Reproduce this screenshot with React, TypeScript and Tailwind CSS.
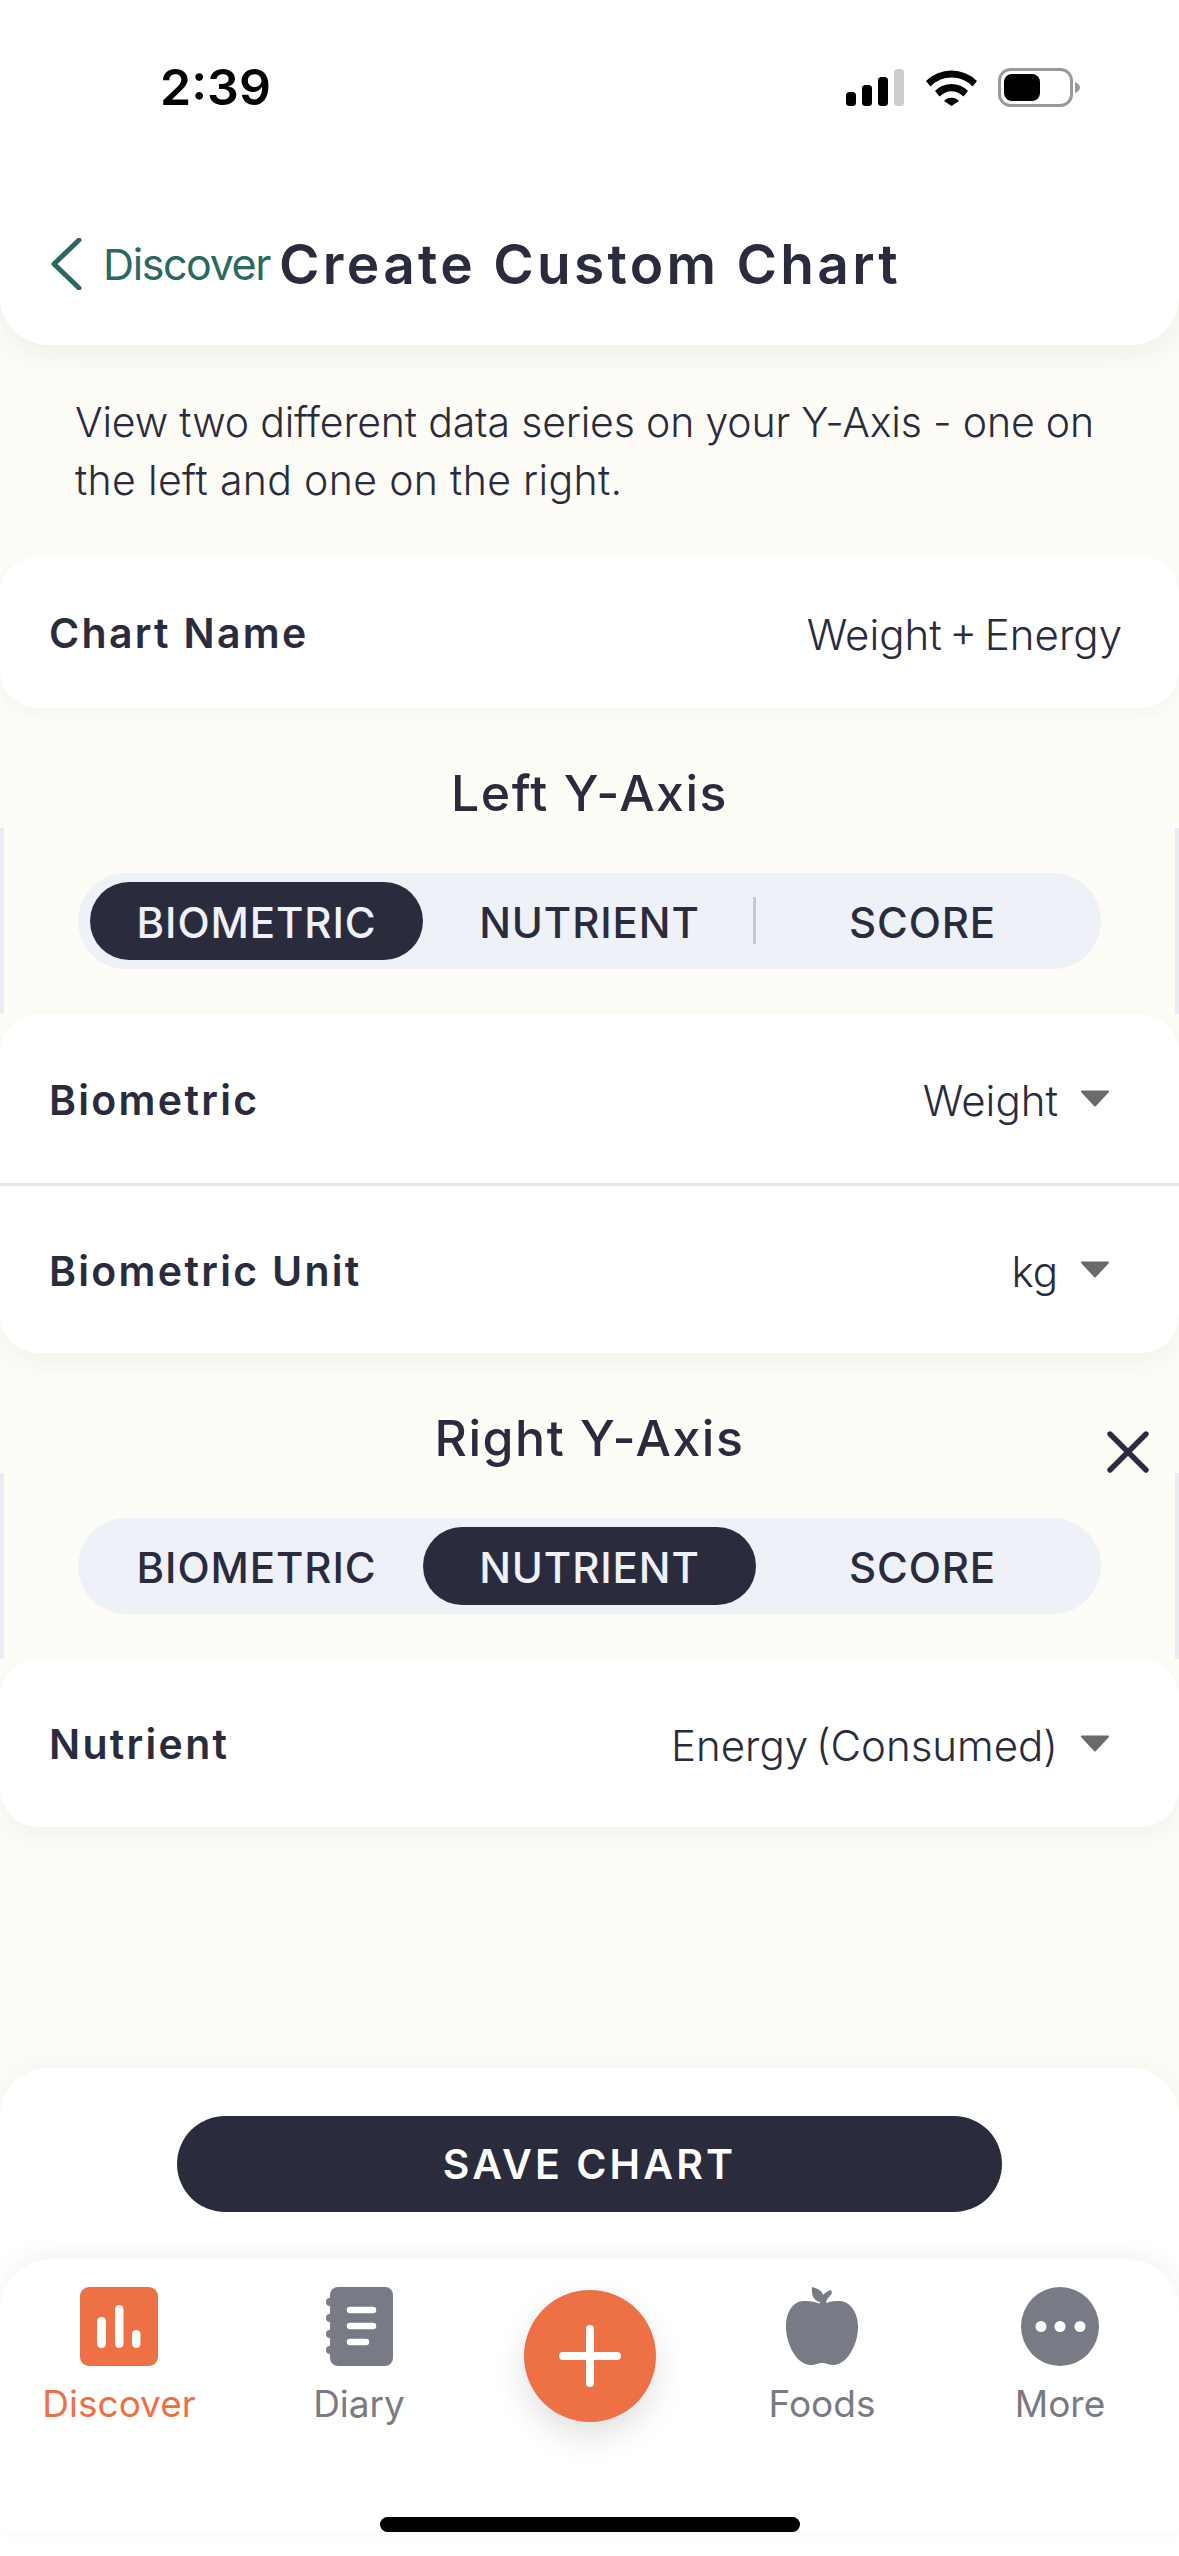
import { X } from "lucide-react";

const tabs = ["BIOMETRIC", "NUTRIENT", "SCORE"];

// Segmented control for one axis
const Segments = ({ active, divider }: { active: number; divider?: boolean }) => (
  <div className="border-x-[4px] border-[#e9ebf5] px-[74px] py-[45px]">
    <div className="grid h-[96px] grid-cols-3 items-center rounded-full bg-[#eff1f9] px-[12px]">
      {tabs.map((t, i) => (
        <div key={t} className="relative flex h-[78px] items-center justify-center">
          <div
            className={
              i === active
                ? "flex h-full w-full items-center justify-center rounded-full bg-[#2a2c3e] pt-[2px] text-[42px] font-medium tracking-[0.9px] text-[#eff1f9]"
                : "flex h-full w-full items-center justify-center rounded-full pt-[2px] text-[42px] font-medium tracking-[0.9px] text-[#2a2c3e]"
            }
          >
            {t}
          </div>
          {divider && i === 1 && <div className="absolute right-0 top-[15px] h-[47px] w-[3px] bg-[#c5c7d2]" />}
        </div>
      ))}
    </div>
  </div>
);

const Caret = () => (
  <svg width="30" height="17" viewBox="0 0 30 17" className="ml-[22px] mb-[4px]">
    <path d="M2 1.5h26L15 15.5z" fill="#6b6b6b" stroke="#6b6b6b" strokeWidth="2" strokeLinejoin="round" />
  </svg>
);

const Row = ({ label, value, h }: { label: string; value: string; h: string }) => (
  <div className={`flex items-center justify-between pl-[49px] pr-[69px] pt-[4px] ${h}`}>
    <span className="text-[41px] font-semibold tracking-[2.3px] text-[#2a2c3e]">{label}</span>
    <span className="flex items-center text-[42px] font-light [word-spacing:-4px] text-[#2a2c3e]">
      {value}
      <Caret />
    </span>
  </div>
);

const Discover = () => (
  <svg width="78" height="79" viewBox="0 0 78 79">
    <rect width="78" height="79" rx="9" fill="#ee7145" />
    <rect x="17" y="30" width="9" height="31" rx="4.5" fill="#fff" />
    <rect x="35" y="18" width="8.5" height="43" rx="4.25" fill="#fff" />
    <rect x="52" y="43" width="8.5" height="18" rx="4.25" fill="#fff" />
  </svg>
);

const Diary = () => (
  <svg width="67" height="79" viewBox="0 0 67 79">
    <rect x="4" width="63" height="79" rx="8" fill="#787a85" />
    <circle cx="4" cy="15" r="4" fill="#787a85" />
    <circle cx="4" cy="31" r="4" fill="#787a85" />
    <circle cx="4" cy="47" r="4" fill="#787a85" />
    <circle cx="4" cy="63" r="4" fill="#787a85" />
    <path d="M24 23h23M24 39h23M24 55h16" stroke="#fff" strokeWidth="6.5" strokeLinecap="round" />
  </svg>
);

const Apple = () => (
  <svg width="72" height="79" viewBox="0 0 72 79">
    <path
      d="M36 17C30 15 24 13.5 17 14 6 15 0 26 0 40c0 16 10 38 25 38 5 0 7-2 11-2s7 2 11 2c15 0 25-22 25-38 0-14-7-25-18-26-7-.5-12 1-18 3z"
      fill="#787a85"
    />
    <path
      d="M26 0c7 2 10 4 11 8 2-2 4-4 8-5l1 3c-2 4-6 5-6 11h-6v-2c-6-1-9-7-8-15z"
      fill="#787a85"
    />
  </svg>
);

const More = () => (
  <svg width="78" height="79" viewBox="0 0 78 79">
    <ellipse cx="39" cy="39.5" rx="39" ry="39.5" fill="#787a85" />
    <circle cx="20" cy="39.5" r="5.5" fill="#fff" />
    <circle cx="39" cy="39.5" r="5.5" fill="#fff" />
    <circle cx="59" cy="39.5" r="5.5" fill="#fff" />
  </svg>
);

const NavItem = ({ icon, label, on }: { icon: React.ReactNode; label: string; on?: boolean }) => (
  <div className="flex flex-col items-center pt-[28px]">
    <div className="flex h-[79px] items-center">{icon}</div>
    <span className={on ? "mt-[16px] text-[37px] leading-[44px] text-[#ee7145]" : "mt-[16px] text-[37px] leading-[44px] text-[#787a85]"}>
      {label}
    </span>
  </div>
);

const StatusIcons = () => (
  <div className="flex items-center">
    <svg width="58" height="37" viewBox="0 0 58 37">
      <rect x="0" y="23" width="10" height="14" rx="3.5" />
      <rect x="16" y="16" width="10" height="21" rx="3.5" />
      <rect x="32" y="8" width="10" height="29" rx="3.5" />
      <rect x="48" y="0" width="10" height="37" rx="3.5" fill="#cdcdcd" />
    </svg>
    <svg width="51" height="37" viewBox="0 0 51 37" className="ml-[22px]">
      <path d="M0 12A36 36 0 0 1 51 12L46.5 17.5A29 29 0 0 0 4.5 17.5z" />
      <path d="M9 22A23 23 0 0 1 42 22L37.5 27.5A16.5 16.5 0 0 0 13.5 27.5z" />
      <path d="M18 32A10.5 10.5 0 0 1 33 32L25.5 37z" />
    </svg>
    <svg width="83" height="39" viewBox="0 0 83 39" className="ml-[21px]">
      <rect x="1.5" y="1.5" width="72" height="36" rx="11" fill="none" stroke="#999" strokeWidth="3" />
      <rect x="6" y="6" width="36" height="27" rx="8" />
      <path d="M77 14c3 1 5 3 5 5.500s-2 4.500-5 5.500z" fill="#999" />
    </svg>
  </div>
);

export default function App() {
  return (
    <div className="flex h-[2556px] w-[1179px] flex-col overflow-hidden bg-[#fdfcf7] font-['Inter',sans-serif] text-[#2a2c3e]">
      {/* header */}
      <header className="rounded-b-[48px] bg-white shadow-[0_10px_30px_rgba(60,50,30,0.07)]">
        <div className="flex items-center justify-between pl-[160px] pr-[98px] pt-[68px]">
          <span className="text-[50px] font-semibold leading-[39px] text-black">2:39</span>
          <StatusIcons />
        </div>
        <div className="mb-[44px] mt-[120px] flex h-[74px] items-center pl-[50px]">
          <svg width="32" height="52" viewBox="0 0 32 52" fill="none">
            <path d="M29 2 4 26l25 24" stroke="#2a6860" strokeWidth="5" strokeLinecap="round" strokeLinejoin="round" />
          </svg>
          <span className="ml-[21px] text-[43px] tracking-[-1.4px] text-[#2a6860]">Discover</span>
          <span className="ml-[9px] text-[55px] font-semibold tracking-[3.3px]">Create Custom Chart</span>
        </div>
      </header>

      <p className="mb-[47px] pl-[75px] pt-[48px] text-[41px] font-light leading-[58px] tracking-[-0.17px]">
        View two different data series on your Y-Axis - one on
        <br />
        <span className="tracking-[0.33px]">the left and one on the right.</span>
      </p>

      <section className="rounded-[38px] bg-white shadow-[0_6px_18px_rgba(60,50,30,0.04)]">
        <Row label="Chart Name" value="Weight + Energy" h="h-[152px] !pr-[57px] [&_svg]:hidden" />
      </section>

      <h2 className="mb-[5px] mt-[55px] text-center text-[50px] font-medium leading-[60px] tracking-[1.5px]">Left Y-Axis</h2>
      <Segments active={0} divider />

      <section className="rounded-[38px] bg-white shadow-[0_10px_24px_rgba(60,50,30,0.05)]">
        <Row label="Biometric" value="Weight" h="h-[169px]" />
        <div className="h-[3px] bg-[#e8e8f0]" />
        <Row label="Biometric Unit" value="kg" h="h-[167px]" />
      </section>

      <div className="relative mb-[5px] mt-[55px]">
        <h2 className="text-center text-[50px] font-medium leading-[60px] tracking-[1.5px]">Right Y-Axis</h2>
        <X className="absolute right-[15px] top-[8px] text-[#2a2c3e]" size={72} strokeWidth={1.8} />
      </div>
      <Segments active={1} />

      <section className="rounded-[38px] bg-white shadow-[0_10px_24px_rgba(60,50,30,0.05)]">
        <Row label="Nutrient" value="Energy (Consumed)" h="h-[168px]" />
      </section>

      {/* save panel + tab bar */}
      <div className="mt-auto rounded-t-[48px] bg-white pt-[48px] shadow-[0_-6px_24px_rgba(60,50,30,0.04)]">
        <div className="mb-[47px] flex justify-center">
          <button className="h-[96px] w-[825px] rounded-full bg-[#2a2c3e] pt-[2px] text-[41px] font-semibold tracking-[3.1px] text-white">
            SAVE CHART
          </button>
        </div>
        <nav className="rounded-t-[52px] bg-white shadow-[0_-6px_24px_rgba(0,0,0,0.05)]">
          <div className="grid grid-cols-[238px_242px_220px_244px_232px]">
            <NavItem icon={<Discover />} label="Discover" on />
            <NavItem icon={<Diary />} label="Diary" />
            <div className="flex justify-center pt-[31px]">
              <div className="flex h-[132px] w-[132px] items-center justify-center rounded-full bg-[#ee7145] shadow-[0_14px_32px_rgba(0,0,0,0.12)]">
                <svg width="62" height="62" viewBox="0 0 62 62">
                  <path d="M31 4v54M4 31h54" stroke="#fff" strokeWidth="8" strokeLinecap="round" />
                </svg>
              </div>
            </div>
            <NavItem icon={<Apple />} label="Foods" />
            <NavItem icon={<More />} label="More" />
          </div>
          <div className="mx-auto mb-[24px] mt-[91px] h-[15px] w-[420px] rounded-full bg-black" />
        </nav>
      </div>
    </div>
  );
}
